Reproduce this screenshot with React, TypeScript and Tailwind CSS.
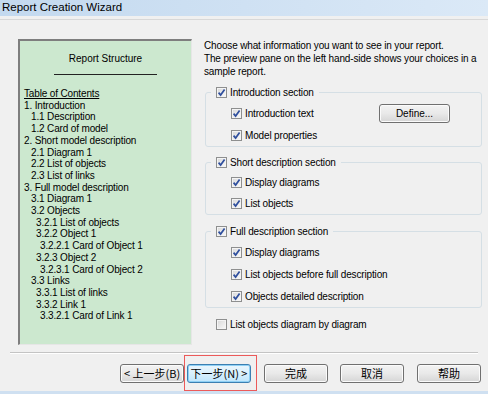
import type { ReactNode } from "react"

const toc: [string, number][] = [
  ["1. Introduction", 0],
  ["1.1 Description", 1],
  ["1.2 Card of model", 1],
  ["2. Short model description", 0],
  ["2.1 Diagram 1", 1],
  ["2.2 List of objects", 1],
  ["2.3 List of links", 1],
  ["3. Full model description", 0],
  ["3.1 Diagram 1", 1],
  ["3.2 Objects", 1],
  ["3.2.1 List of objects", 2],
  ["3.2.2 Object 1", 2],
  ["3.2.2.1 Card of Object 1", 3],
  ["3.2.3 Object 2", 2],
  ["3.2.3.1 Card of Object 2", 3],
  ["3.3 Links", 1],
  ["3.3.1 List of links", 2],
  ["3.3.2 Link 1", 2],
  ["3.3.2.1 Card of Link 1", 3],
]

const indent = ["pl-0", "pl-[7px]", "pl-[12px]", "pl-[16px]"]

function Check({ checked = true }: { checked?: boolean }) {
  return (
    <span className="flex h-[11px] w-[11px] shrink-0 items-center justify-center border border-[#8e8f8f] bg-linear-to-br from-[#d8d8d8] to-[#fafafa] shadow-[inset_0_0_0_1px_#f4f4f4]">
      {checked && (
        <svg viewBox="0 0 9 9" className="h-[9px] w-[9px]">
          <path d="M1.6 4.6 L3.6 7 L7.6 1.4" stroke="#2f4f9e" strokeWidth="1.7" fill="none" />
        </svg>
      )}
    </span>
  )
}

function Option({ label, checked = true }: { label: string; checked?: boolean }) {
  return (
    <span className="flex items-center gap-[3px]">
      <Check checked={checked} />
      <span>{label}</span>
    </span>
  )
}

function Group({ title, rows, className, children }: { title: string; rows: string; className: string; children: ReactNode }) {
  return (
    <fieldset className={`rounded-[3px] border border-[#d5dfe5] ${className}`}>
      <legend className="ml-[5px] flex h-[14px] items-center px-[5px]">
        <Option label={title} />
      </legend>
      <div className={`flex flex-col pl-[25px] ${rows}`}>{children}</div>
    </fieldset>
  )
}

function Btn({ children, focus = false, w = "w-[64px]" }: { children: ReactNode; focus?: boolean; w?: string }) {
  return (
    <button
      className={
        focus
          ? `flex h-[19px] ${w} items-center justify-center rounded-[3px] border border-[#3c7fb1] bg-linear-to-b from-[#eaf6fd] via-[#d9f0fc] to-[#bee6fd] shadow-[inset_0_0_0_1px_#8ed0f5]`
          : `flex h-[19px] ${w} items-center justify-center rounded-[3px] border border-[#707070] bg-linear-to-b from-[#f3f3f3] via-[#e9e9e9] to-[#d5d5d5] shadow-[inset_0_0_0_1px_#fbfbfb]`
      }
    >
      {children}
    </button>
  )
}

export default function App() {
  return (
    <div className="flex h-[394px] w-[488px] flex-col overflow-hidden bg-[#f0f0f0] font-['Liberation_Sans',Arial,'Noto_Sans_CJK_SC',sans-serif] text-black">
      {/* title bar */}
      <div className="flex h-[16px] items-center bg-linear-to-r from-[#c3d9ef] via-[#cfe1f3] to-[#dbe9f7] pl-[2px] text-[11.5px]">
        Report Creation Wizard
      </div>
      <div className="mt-[3px] h-px bg-[#d8d8d8]" />

      <div className="flex flex-1 flex-col">
        <div className="mt-[19px] flex h-[306px] pl-[18px]">
          {/* preview pane */}
          <div className="flex w-[174px] flex-col border-t-2 border-l-2 border-t-[#7e7e7e] border-l-[#7e7e7e] border-r border-b border-r-[#e6e6e6] border-b-[#e6e6e6] bg-[#cce8cf] text-[10px]">
            <div className="mt-[12px] text-center leading-[12px]">Report Structure</div>
            <div className="mx-auto mt-[9px] h-px w-[103px] bg-[#222]" />
            <div className="mt-[13px] flex flex-col pl-[4px] leading-[11.7px] tracking-[-0.15px]">
              <span className="underline">Table of Contents</span>
              {toc.map(([t, l]) => (
                <span key={t} className={indent[l]}>
                  {t}
                </span>
              ))}
            </div>
          </div>

          {/* options */}
          <div className="ml-[12px] flex w-[278px] flex-col text-[10px] tracking-[-0.15px]">
            <p className="whitespace-nowrap leading-[13px]">
              Choose what information you want to see in your report.
              <br />
              The preview pane on the left hand-side shows your choices in a
              <br />
              sample report.
            </p>
            <div className="flex flex-col pl-px">
              <Group title="Introduction section" className="mt-[7px] pt-[3px]" rows="[&>*]:h-[22px]">
                <div className="flex items-center">
                  <Option label="Introduction text" />
                  <span className="ml-auto mr-[31px] tracking-normal">
                    <Btn w="w-[71px]">Define...</Btn>
                  </span>
                </div>
                <div className="flex items-center">
                  <Option label="Model properties" />
                </div>
              </Group>
              <Group title="Short description section" className="mt-[8px] pt-[3px]" rows="[&>*]:h-[21px]">
                <div className="flex items-center">
                  <Option label="Display diagrams" />
                </div>
                <div className="flex items-center">
                  <Option label="List objects" />
                </div>
              </Group>
              <Group title="Full description section" className="mt-[9px] pt-[3px]" rows="[&>*]:h-[22px]">
                <div className="flex items-center">
                  <Option label="Display diagrams" />
                </div>
                <div className="flex items-center">
                  <Option label="List objects before full description" />
                </div>
                <div className="flex items-center">
                  <Option label="Objects detailed description" />
                </div>
              </Group>
            </div>
            <div className="mt-[9px] flex h-[14px] items-center pl-[12px]">
              <Option label="List objects diagram by diagram" checked={false} />
            </div>
          </div>
        </div>

        <div className="mx-[10px] mt-[7px] h-[2px] border-t border-[#c4c4c4] border-b border-b-white" />

        {/* buttons */}
        <div className="mt-[10px] flex items-center pl-[120px] font-['Noto_Sans_CJK_SC',sans-serif] text-[11px]">
          <Btn>&lt; 上一步(B)</Btn>
          <span className="relative ml-[3px]">
            <Btn focus>下一步(N) &gt;</Btn>
            <span className="pointer-events-none absolute -top-[9px] -bottom-[8px] -left-[3px] -right-[6px] border border-[#ec5a5a]" />
          </span>
          <span className="ml-[13px]">
            <Btn>完成</Btn>
          </span>
          <span className="ml-[12px]">
            <Btn>取消</Btn>
          </span>
          <span className="ml-[13px]">
            <Btn>帮助</Btn>
          </span>
        </div>
      </div>
      <div className="h-[3px] bg-[#cfe0f1]" />
    </div>
  )
}
